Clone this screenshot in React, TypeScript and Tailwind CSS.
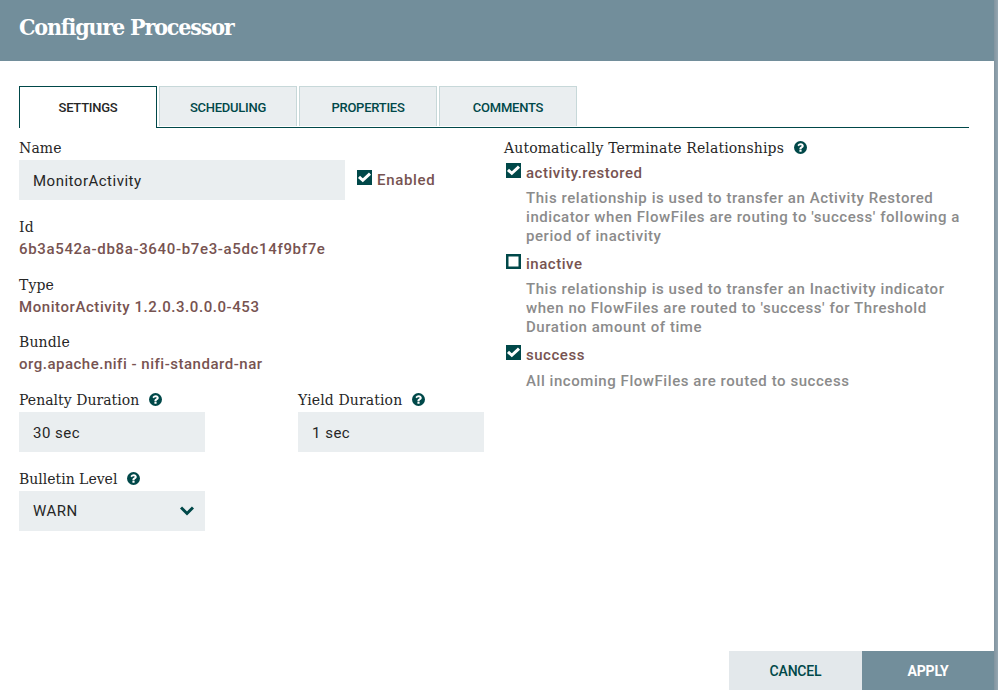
import React from "react";

const slab = "font-['Roboto_Slab','DejaVu_Serif',serif]";
const slabBold = "font-['Roboto_Slab','DejaVu_Serif_Condensed','DejaVu_Serif',serif]";

function Help() {
  return (
    <svg className="mb-px ml-[10px] h-[13px] w-[13px] shrink-0" viewBox="0 0 1536 1536">
      <circle cx="768" cy="768" r="768" fill="#004849" />
      <path
        fill="#fff"
        d="M896 1248v-192q0-14-9-23t-23-9H672q-14 0-23 9t-9 23v192q0 14 9 23t23 9h192q14 0 23-9t9-23zM1152 576q0-88-55.500-163T958 297t-170-41q-243 0-371 213-15 24 8 42l132 100q7 6 19 6 16 0 25-12 53-68 86-92 34-24 86-24 48 0 85.500 26t37.500 59q0 38-20 61t-68 45q-63 28-115.500 86.500T640 892v36q0 14 9 23t23 9h192q14 0 23-9t9-23q0-19 21.500-49.500T972 829q32-18 49-28.500t46-35 44.500-48 28-60.500 12.500-81z"
      />
    </svg>
  );
}

function Label({
  children,
  help,
  className = "",
  tracking = "tracking-[0.13px]",
}: {
  children: string;
  help?: boolean;
  className?: string;
  tracking?: string;
}) {
  return (
    <div className={`flex h-5 items-center ${className}`}>
      <span className={`${slab} ${tracking} whitespace-nowrap text-[14px] leading-5 text-[#262626]`}>{children}</span>
      {help && <Help />}
    </div>
  );
}

function Checkbox({ checked }: { checked?: boolean }) {
  return (
    <svg className="h-[15px] w-[15px] shrink-0" viewBox="0 0 15 15">
      <rect width="15" height="15" fill="#004849" />
      {checked ? (
        <path d="M2 6.800 5.800 10.300 13 3.600" fill="none" stroke="#fff" strokeWidth="3" />
      ) : (
        <rect x="2.500" y="2.500" width="10" height="10" fill="#fff" />
      )}
    </svg>
  );
}

function Field({ value, className, children }: { value: string; className: string; children?: React.ReactNode }) {
  return (
    <div className={`flex h-10 items-center justify-between bg-[#eaeef0] pl-[14px] text-[15px] tracking-[0.5px] text-[#262626] ${className}`}>
      <span>{value}</span>
      {children}
    </div>
  );
}

function Info({ label, value, className, tracking }: { label: string; value: string; className: string; tracking: string }) {
  return (
    <div className={className}>
      <Label>{label}</Label>
      <div className={`mt-[2px] h-5 text-[15px] font-medium leading-5 text-[#775351] ${tracking}`}>{value}</div>
    </div>
  );
}

function Relationship({ name, checked, lines, gap = "mt-[6px]" }: { name: string; checked?: boolean; lines: string[]; gap?: string }) {
  return (
    <div className="mb-[8px] pl-[2px]">
      <div className="flex h-5 items-start">
        <Checkbox checked={checked} />
        <span className="ml-[5px] text-[15px] font-medium leading-5 tracking-[0.53px] text-[#775351]">{name}</span>
      </div>
      <div className={`${gap} pl-5 text-[15px] font-medium leading-[19px] tracking-[0.56px] text-[#8b8b8b]`}>
        {lines.map((line) => (
          <div key={line} className="whitespace-nowrap">{line}</div>
        ))}
      </div>
    </div>
  );
}

export default function App() {
  return (
    <div className="flex h-[690px] w-[998px] overflow-hidden bg-white font-[Roboto,sans-serif]">
      <div className="flex w-[994px] flex-col">
        <header className="h-[61px] bg-[#728e9b] pl-[19px] pt-[11px]">
          <h1 className={`${slabBold} whitespace-nowrap text-[23px] font-bold leading-8 tracking-[-1.180px] text-white`}>Configure Processor</h1>
        </header>

        <nav className="ml-[19px] mt-[25px] flex h-[42px] w-[950px] text-[13px] font-medium tracking-[-0.25px] text-[#004849]">
          <div className="flex w-[138px] items-center justify-center border border-b-0 border-[#004849] text-[#262626]">SETTINGS</div>
          <div className="flex flex-1 gap-[2px] border-b border-[#004849] pb-px pl-[2px]">
            {["SCHEDULING", "PROPERTIES", "COMMENTS"].map((tab) => (
              <div key={tab} className="flex w-[138px] items-center justify-center border border-b-0 border-[#c7d8d9] bg-[#eaeef0] pt-[2px]">
                {tab}
              </div>
            ))}
          </div>
        </nav>

        <main className="flex flex-1 pl-[19px] pt-[10px]">
          <section className="w-[485px]">
            <Label>Name</Label>
            <div className="mt-[2px] flex">
              <Field value="MonitorActivity" className="w-[326px] pt-[2px]" />
              <div className="ml-3 flex pt-[10px]">
                <Checkbox checked />
                <span className="ml-[5px] text-[15px] font-medium leading-5 tracking-[0.68px] text-[#775351]">Enabled</span>
              </div>
            </div>
            <Info className="mt-[17px]" label="Id" value="6b3a542a-db8a-3640-b7e3-a5dc14f9bf7e" tracking="tracking-[0.66px]" />
            <Info className="mt-4" label="Type" value="MonitorActivity 1.2.0.3.0.0.0-453" tracking="tracking-[0.57px]" />
            <Info className="mt-[15px]" label="Bundle" value="org.apache.nifi - nifi-standard-nar" tracking="tracking-[0.51px]" />
            <div className="mt-4 flex">
              <div className="w-[279px]">
                <Label help tracking="tracking-[0.03px]">Penalty Duration</Label>
                <Field value="30 sec" className="mt-[2px] w-[186px] pt-[2px]" />
              </div>
              <div>
                <Label help>Yield Duration</Label>
                <Field value="1 sec" className="mt-[2px] w-[186px] pt-[2px]" />
              </div>
            </div>
            <Label help className="mt-[17px]" tracking="tracking-normal">Bulletin Level</Label>
            <Field value="WARN" className="mt-[2px] w-[186px] pr-[11px]">
              <svg className="h-[10px] w-[14px]" viewBox="0 0 14 10">
                <path d="M1 1.500 7 7.500 13 1.500" fill="none" stroke="#004849" strokeWidth="3" />
              </svg>
            </Field>
          </section>

          <section>
            <Label help className="mb-[5px]">Automatically Terminate Relationships</Label>
            <Relationship
              name="activity.restored"
              checked
              lines={[
                "This relationship is used to transfer an Activity Restored",
                "indicator when FlowFiles are routing to 'success' following a",
                "period of inactivity",
              ]}
            />
            <Relationship
              name="inactive"
              lines={[
                "This relationship is used to transfer an Inactivity indicator",
                "when no FlowFiles are routed to 'success' for Threshold",
                "Duration amount of time",
              ]}
            />
            <Relationship name="success" checked gap="mt-[7px]" lines={["All incoming FlowFiles are routed to success"]} />
          </section>
        </main>

        <footer className="flex h-[39px] justify-end text-[14px] font-medium tracking-[-0.2px]">
          <button className="w-[133px] bg-[#e3e8eb] pt-[2px] text-[#004849]">CANCEL</button>
          <button className="w-[132px] bg-[#728e9b] pt-[2px] font-bold text-white">APPLY</button>
        </footer>
      </div>
      <div className="w-1 bg-gradient-to-r from-[#82949f] to-[#94a6b1]" />
    </div>
  );
}
